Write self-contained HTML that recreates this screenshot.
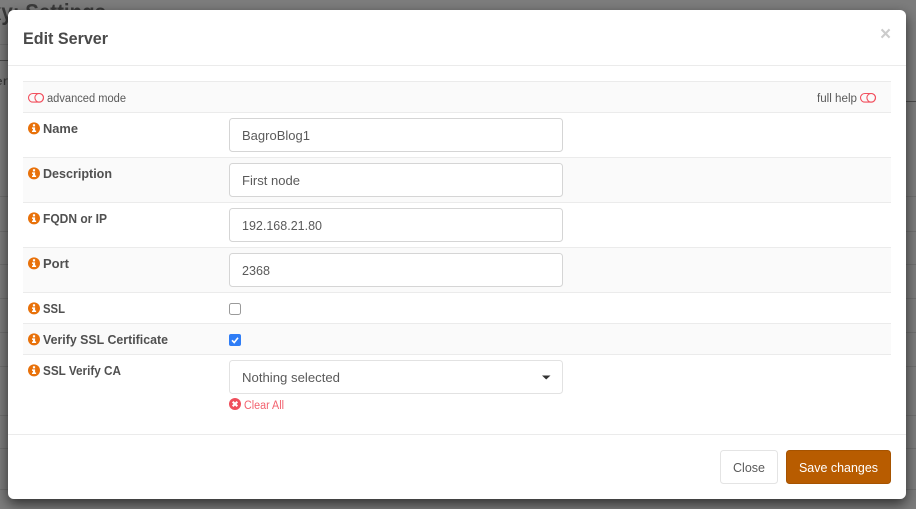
<!DOCTYPE html>
<html lang="en">
<head>
<meta charset="utf-8">
<title>Edit Server</title>
<style>
html,body{margin:0;padding:0;width:916px;height:509px;overflow:hidden;background:#7b7b7b}
svg{display:block}
text{font-family:"Liberation Sans",sans-serif}
.lb{font-size:12.5px;font-weight:bold;fill:#505050}
.v{font-size:13px;fill:#5a5a5a}
.s{font-size:11.5px;fill:#5a5a5a}
.inp{fill:#fff;stroke:#d5d5d5}
.bgl{stroke:#6f6f6f;stroke-width:1}
.ln{stroke:#ebebeb;stroke-width:1}
</style>
</head>
<body>
<svg width="916" height="509" viewBox="0 0 916 509" xmlns="http://www.w3.org/2000/svg">
<defs>
<filter id="sh" x="-5%" y="-8%" width="110%" height="118%">
<feDropShadow dx="0" dy="5" stdDeviation="6.5" flood-color="#000" flood-opacity=".62"/>
</filter>
<g id="info">
<circle cx="0" cy="0" r="6" fill="#e8710a"/>
<path d="M-1.1 -4.1h2.2v2.1h-2.2zM-2 -1h3.1v3.1h1v1.5h-4.1v-1.5h1v-1.6h-1z" fill="#fff"/>
</g>
</defs>
<rect width="916" height="509" fill="#7c7c7c"/>
<text x="-10" y="20" font-size="23" font-weight="bold" fill="#3a3a3a" textLength="116" lengthAdjust="spacingAndGlyphs">xy: Settings</text>
<text x="-6" y="85" font-size="12" fill="#3a3a3a" textLength="14" lengthAdjust="spacingAndGlyphs">er</text>
<path class="bgl" d="M0 44.5H8M0 196.5H8M0 231.5H8M0 264.5H8M0 298.5H8M0 332.5H8M0 366.5H8M0 415.5H8M0 448.5H8M0 489.5H8M906 196.5H916M906 231.5H916M906 264.5H916M906 298.5H916M906 332.5H916M906 366.5H916M906 415.5H916M906 448.5H916M906 489.5H916"/>
<path d="M0 60.5H8M906 101.5H916" stroke="#4a4a4a"/>

<rect x="8" y="10" width="898" height="489" rx="6" fill="#fff" filter="url(#sh)"/>

<text x="23" y="44" font-size="16.5" font-weight="bold" fill="#4a4a4a" textLength="85" lengthAdjust="spacingAndGlyphs">Edit Server</text>
<text x="880" y="40" font-size="19" font-weight="bold" fill="#ccc">×</text>
<path class="ln" d="M8 65.5H906M8 434.5H906"/>

<rect x="23" y="81" width="868" height="31" fill="#fafafa"/>
<rect x="23" y="157" width="868" height="45" fill="#fafafa"/>
<rect x="23" y="247" width="868" height="45" fill="#fafafa"/>
<rect x="23" y="323" width="868" height="31" fill="#fafafa"/>
<path class="ln" d="M23 81.5H891M23 112.5H891M23 157.5H891M23 202.5H891M23 247.5H891M23 292.5H891M23 323.5H891M23 354.5H891"/>

<g fill="none" stroke="#f2515f" stroke-width="1.1">
<rect x="28.5" y="93.5" width="15" height="8.6" rx="4.3"/>
<circle cx="39.2" cy="97.8" r="4.3"/>
<rect x="860.5" y="93.5" width="15" height="8.6" rx="4.3"/>
<circle cx="871.2" cy="97.8" r="4.3"/>
</g>
<text class="s" x="47" y="102" textLength="79" lengthAdjust="spacingAndGlyphs">advanced mode</text>
<text class="s" x="817" y="102" textLength="40" lengthAdjust="spacingAndGlyphs">full help</text>

<use href="#info" x="34" y="128.4"/>
<use href="#info" x="34" y="173.4"/>
<use href="#info" x="34" y="218.4"/>
<use href="#info" x="34" y="263.4"/>
<use href="#info" x="34" y="308.4"/>
<use href="#info" x="34" y="339.4"/>
<use href="#info" x="34" y="370.4"/>

<text class="lb" x="43" y="133" textLength="35" lengthAdjust="spacingAndGlyphs">Name</text>
<text class="lb" x="43" y="178" textLength="69" lengthAdjust="spacingAndGlyphs">Description</text>
<text class="lb" x="43" y="223" textLength="64" lengthAdjust="spacingAndGlyphs">FQDN or IP</text>
<text class="lb" x="43" y="268" textLength="26" lengthAdjust="spacingAndGlyphs">Port</text>
<text class="lb" x="43" y="313" textLength="22" lengthAdjust="spacingAndGlyphs">SSL</text>
<text class="lb" x="43" y="344" textLength="125" lengthAdjust="spacingAndGlyphs">Verify SSL Certificate</text>
<text class="lb" x="43" y="375" textLength="78" lengthAdjust="spacingAndGlyphs">SSL Verify CA</text>

<rect class="inp" x="229.5" y="118.5" width="333" height="33" rx="3"/>
<rect class="inp" x="229.5" y="163.5" width="333" height="33" rx="3"/>
<rect class="inp" x="229.5" y="208.5" width="333" height="33" rx="3"/>
<rect class="inp" x="229.5" y="253.5" width="333" height="33" rx="3"/>
<rect x="229.5" y="360.5" width="333" height="33" rx="3" fill="#fff" stroke="#e2e2e2"/>
<text class="v" x="242" y="140" textLength="68" lengthAdjust="spacingAndGlyphs">BagroBlog1</text>
<text class="v" x="242" y="185" textLength="58" lengthAdjust="spacingAndGlyphs">First node</text>
<text class="v" x="242" y="230" textLength="80" lengthAdjust="spacingAndGlyphs">192.168.21.80</text>
<text class="v" x="242" y="275" textLength="28" lengthAdjust="spacingAndGlyphs">2368</text>
<text class="v" x="242" y="382" textLength="98" lengthAdjust="spacingAndGlyphs">Nothing selected</text>
<path d="M542 375.5H550.5L546.2 379.5Z" fill="#333"/>

<rect x="229.5" y="303.5" width="11" height="11" rx="2" fill="#fff" stroke="#9a9a9a"/>
<rect x="229" y="334" width="12" height="12" rx="2" fill="#2f7df6"/>
<path d="M232 340.3L234.2 342.5L238 337.8" fill="none" stroke="#fff" stroke-width="1.6"/>

<circle cx="235" cy="404" r="6" fill="#ef4f5c"/>
<path d="M232.7 401.7L237.3 406.3M237.3 401.7L232.7 406.3" stroke="#fff" stroke-width="2.1"/>
<text x="244" y="409" font-size="11.5" fill="#f2616e" textLength="40" lengthAdjust="spacingAndGlyphs">Clear All</text>

<rect x="720.5" y="450.5" width="57" height="33" rx="3" fill="#fff" stroke="#e4e4e4"/>
<text x="733" y="472" font-size="13" fill="#5a5a5a" textLength="32" lengthAdjust="spacingAndGlyphs">Close</text>
<rect x="786.5" y="450.5" width="104" height="33" rx="3" fill="#b85c00" stroke="#a65300"/>
<text x="799" y="472" font-size="13" fill="#fff" textLength="79" lengthAdjust="spacingAndGlyphs">Save changes</text>
</svg>
</body>
</html>
